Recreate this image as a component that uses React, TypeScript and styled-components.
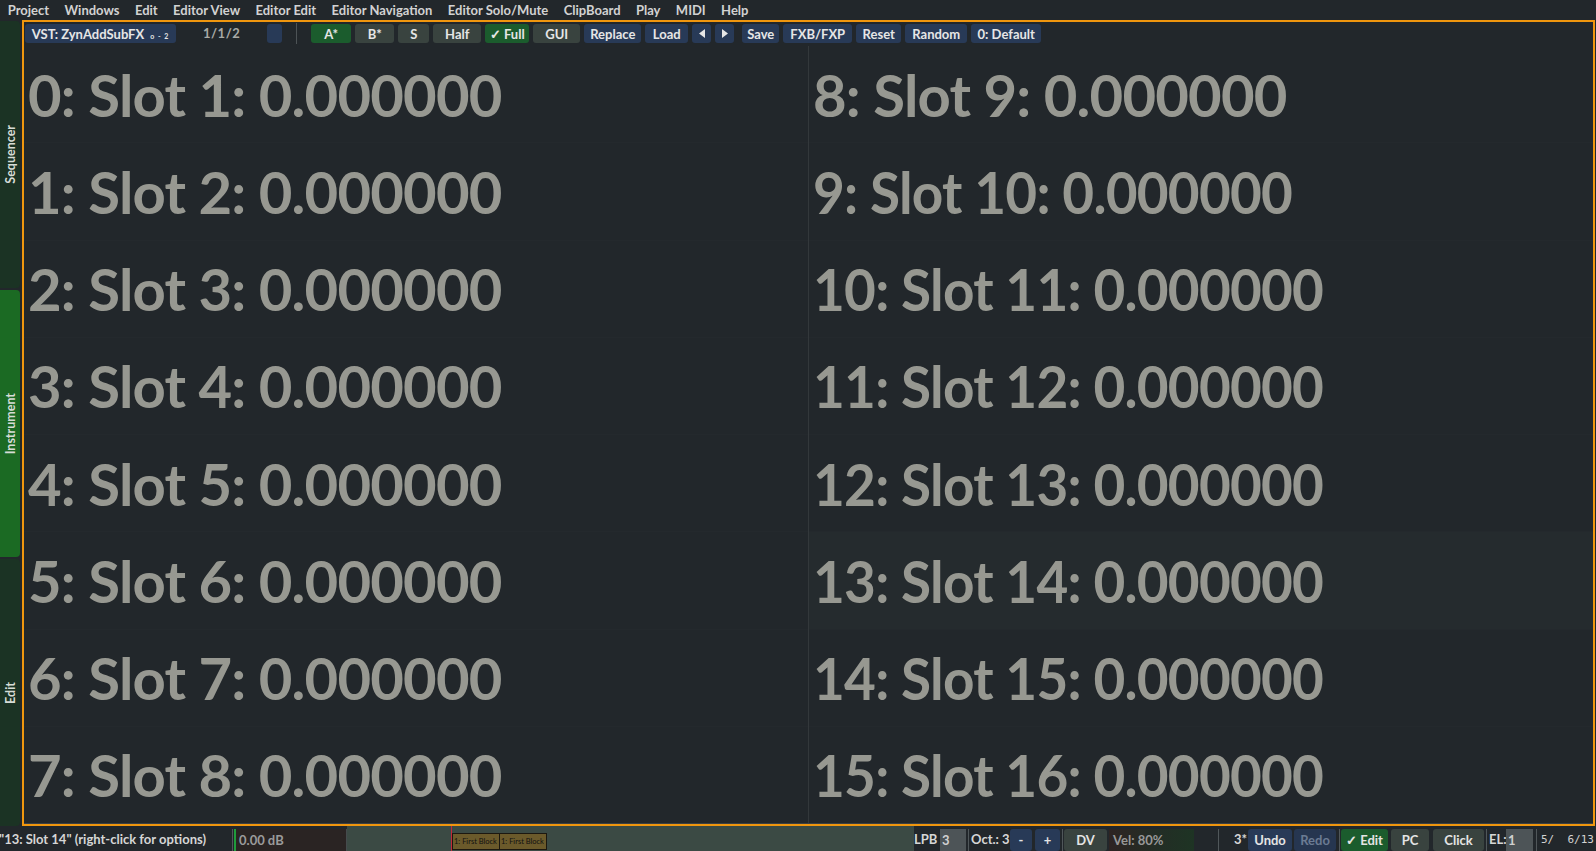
import React from 'react';
import styled, { createGlobalStyle } from 'styled-components';

const GlobalStyle = createGlobalStyle`
  html, body {
    margin: 0;
    padding: 0;
    background: #22272b;
  }
  body {
    font-family: Lato, "Noto Sans", sans-serif;
    overflow: hidden;
  }
`;

type Tone = 'blue' | 'green' | 'gray' | 'dim';

const toneBg: Record<Tone, string> = {
  blue: '#283a57',
  green: '#1b5c2d',
  gray: '#39433f',
  dim: '#263650',
};

const Shell = styled.div`
  width: 1596px;
  height: 851px;
  display: flex;
  flex-direction: column;
  background: #22272b;
`;

const MenuBar = styled.div`
  height: 20px;
  display: flex;
  align-items: center;
`;

const MenuItem = styled.span`
  font-size: 13px;
  font-weight: 700;
  color: #d2d2d2;
  padding: 0 7.7px;
  white-space: nowrap;
`;

const Body = styled.div`
  height: 806px;
  display: flex;
`;

const SideBar = styled.div`
  width: 20px;
  margin-right: 2px;
  padding-top: 1px;
  display: flex;
  flex-direction: column;
  gap: 2px;
`;

const SideTab = styled.div<{ $active?: boolean }>`
  flex: 1;
  background: ${(p) => (p.$active ? '#1b6a23' : '#1b3324')};
  border-radius: 0 4px 4px 0;
  display: flex;
  align-items: center;
  justify-content: center;
`;

const SideLabel = styled.span`
  writing-mode: vertical-rl;
  transform: rotate(180deg);
  font-size: 12.5px;
  font-weight: 700;
  color: #d6dcd6;
  white-space: nowrap;
`;

const Frame = styled.div`
  flex: 1;
  min-width: 0;
  margin-right: 1px;
  border: 2px solid #f0960e;
  display: flex;
  flex-direction: column;
`;

const Toolbar = styled.div`
  height: 24px;
  padding: 2px 0 0 1px;
  box-sizing: border-box;
  display: flex;
  align-items: flex-start;
  gap: 4px;
`;

const ToolButton = styled.div<{ $tone: Tone; $w: number; $ml?: number }>`
  width: ${(p) => p.$w}px;
  margin-left: ${(p) => p.$ml ?? 0}px;
  height: 19px;
  border-radius: 3px;
  background: ${(p) => toneBg[p.$tone]};
  color: #e6e6e6;
  font-size: 13px;
  font-weight: 700;
  display: flex;
  align-items: center;
  justify-content: center;
  white-space: nowrap;
  flex-shrink: 0;
`;

const Tiny = styled.span`
  font-size: 7px;
  margin-left: 6px;
  margin-top: 5px;
  letter-spacing: 1px;
`;

const Counter = styled.span`
  margin: 0 23px 0 23px;
  height: 19px;
  line-height: 19px;
  font-size: 13px;
  font-weight: 700;
  color: #a9aaa6;
  letter-spacing: 0.5px;
`;

const ToolSep = styled.div`
  width: 1px;
  height: 21px;
  margin: -1px 10px 0;
  background: #4d5356;
`;

const Grid = styled.div`
  flex: 1;
  display: flex;
  border-bottom: 1px solid #3b4043;
`;

const Column = styled.div<{ $divider?: boolean }>`
  flex: 1;
  display: flex;
  flex-direction: column;
  border-right: ${(p) => (p.$divider ? '1px solid #33383b' : 'none')};
`;

const Row = styled.div<{ $selected?: boolean }>`
  flex: 1;
  display: flex;
  align-items: center;
  padding-left: 4px;
  background: ${(p) => (p.$selected ? '#252b2e' : 'transparent')};
  border-top: 1px solid #24292d;
  &:first-child {
    border-top: none;
  }
`;

// long labels are squeezed horizontally, as the original does
const SlotLabel = styled.span<{ $squeeze: boolean }>`
  display: inline-block;
  font-size: 58px;
  font-weight: 700;
  letter-spacing: -0.8px;
  color: #979891;
  white-space: pre;
  transform-origin: left center;
  transform: ${(p) => (p.$squeeze ? 'scaleX(0.946)' : 'none')};
`;

const StatusBar = styled.div`
  height: 25px;
  display: flex;
  align-items: stretch;
  font-size: 13px;
  font-weight: 700;
  color: #d6d6d6;
`;

const StatusMsg = styled.div`
  width: 233px;
  margin-left: -1px;
  line-height: 27px;
  white-space: nowrap;
  overflow: hidden;
`;

const VLine = styled.div`
  width: 1px;
  margin-top: 3px;
  background: #50575a;
  flex-shrink: 0;
`;

const Meter = styled.div`
  width: 113px;
  margin: 3px 0 0 1px;
  border-left: 2px solid #1f9c3b;
  border-right: 1px solid #454b4d;
  background: #2a2423;
  color: #9b9b9b;
  padding-left: 3px;
  line-height: 23px;
  box-sizing: border-box;
  flex-shrink: 0;
`;

const PatternArea = styled.div`
  flex: 1;
  background: #3b4a44;
  display: flex;
  align-items: stretch;
  padding-left: 104px;
`;

const RedLine = styled.div`
  width: 1px;
  background: #c3283a;
`;

const BlockStrip = styled.div`
  display: flex;
  margin-top: 7px;
  height: 17px;
  border: 1px solid #1c1810;
  box-sizing: border-box;
`;

const Block = styled.div`
  width: 45px;
  background: #6b5a2b;
  border-right: 1px solid #1c1810;
  font-size: 7.5px;
  font-weight: 400;
  color: #111;
  line-height: 15px;
  padding-left: 1px;
  white-space: nowrap;
  overflow: hidden;
  &:last-child {
    border-right: none;
  }
`;

const StatusLabel = styled.span<{ $pl?: number; $w: number }>`
  box-sizing: border-box;
  padding-left: ${(p) => p.$pl ?? 0}px;
  width: ${(p) => p.$w}px;
  line-height: 27px;
  white-space: nowrap;
  flex-shrink: 0;
`;

const ValueBox = styled.div<{ $w: number }>`
  width: ${(p) => p.$w}px;
  margin-top: 3px;
  background: #4d5457;
  padding-left: 2px;
  line-height: 23px;
  color: #d0d0d0;
  box-sizing: border-box;
  flex-shrink: 0;
`;

const StatusBtn = styled.div<{ $tone: Tone; $w: number; $ml?: number }>`
  width: ${(p) => p.$w}px;
  margin: 3px 0 0 ${(p) => p.$ml ?? 0}px;
  border-radius: 3px;
  background: ${(p) => toneBg[p.$tone]};
  color: ${(p) => (p.$tone === 'dim' ? '#6b7b93' : '#e4e4e4')};
  display: flex;
  align-items: center;
  justify-content: center;
  white-space: nowrap;
  flex-shrink: 0;
`;

const VelBox = styled.div`
  width: 85px;
  margin: 3px 0 0 2px;
  padding-left: 4px;
  box-sizing: border-box;
  background: linear-gradient(90deg, #2e2423 0%, #232d25 55%, #1e3424 100%);
  color: #989898;
  line-height: 23px;
  flex-shrink: 0;
`;

const Spacer = styled.div<{ $w: number }>`
  width: ${(p) => p.$w}px;
  flex-shrink: 0;
`;

const Mono = styled.span`
  width: 59px;
  box-sizing: border-box;
  padding-left: 4px;
  font-family: "DejaVu Sans Mono", "Liberation Mono", monospace;
  font-weight: 400;
  font-size: 11px;
  line-height: 28px;
  white-space: pre;
  color: #d2d2d2;
  flex-shrink: 0;
`;

const Arrow = ({ dir }: { dir: 'left' | 'right' }) => (
  <svg width="6" height="9" viewBox="0 0 6 9">
    {dir === 'left' ? <polygon points="6,0 6,9 0,4.5" fill="#e6e6e6" /> : <polygon points="0,0 0,9 6,4.5" fill="#e6e6e6" />}
  </svg>
);

const menus = ['Project', 'Windows', 'Edit', 'Editor View', 'Editor Edit', 'Editor Navigation', 'Editor Solo/Mute', 'ClipBoard', 'Play', 'MIDI', 'Help'];

const slots = Array.from({ length: 16 }, (_, i) => `${i}: Slot ${i + 1}: 0.000000`);

export default function App() {
  return (
    <Shell>
      <GlobalStyle />
      <MenuBar>
        {menus.map((m) => (
          <MenuItem key={m}>{m}</MenuItem>
        ))}
      </MenuBar>
      <Body>
        <SideBar>
          <SideTab>
            <SideLabel>Sequencer</SideLabel>
          </SideTab>
          <SideTab $active>
            <SideLabel>Instrument</SideLabel>
          </SideTab>
          <SideTab>
            <SideLabel>Edit</SideLabel>
          </SideTab>
        </SideBar>
        <Frame>
          <Toolbar>
            <ToolButton $tone="blue" $w={151}>
              VST: ZynAddSubFX<Tiny>o - 2</Tiny>
            </ToolButton>
            <Counter>1/1/2</Counter>
            <ToolButton $tone="blue" $w={15} />
            <ToolSep />
            <ToolButton $tone="green" $w={40}>A*</ToolButton>
            <ToolButton $tone="gray" $w={39}>B*</ToolButton>
            <ToolButton $tone="gray" $w={31}>S</ToolButton>
            <ToolButton $tone="gray" $w={48}>Half</ToolButton>
            <ToolButton $tone="green" $w={44}>✓ Full</ToolButton>
            <ToolButton $tone="gray" $w={47}>GUI</ToolButton>
            <ToolButton $tone="blue" $w={57}>Replace</ToolButton>
            <ToolButton $tone="blue" $w={43}>Load</ToolButton>
            <ToolButton $tone="blue" $w={19}>
              <Arrow dir="left" />
            </ToolButton>
            <ToolButton $tone="blue" $w={19}>
              <Arrow dir="right" />
            </ToolButton>
            <ToolButton $tone="blue" $w={37} $ml={4}>Save</ToolButton>
            <ToolButton $tone="blue" $w={69}>FXB/FXP</ToolButton>
            <ToolButton $tone="blue" $w={45}>Reset</ToolButton>
            <ToolButton $tone="blue" $w={62}>Random</ToolButton>
            <ToolButton $tone="blue" $w={70}>0: Default</ToolButton>
          </Toolbar>
          <Grid>
            <Column $divider>
              {slots.slice(0, 8).map((s) => (
                <Row key={s}>
                  <SlotLabel $squeeze={s.length > 19}>{s}</SlotLabel>
                </Row>
              ))}
            </Column>
            <Column>
              {slots.slice(8).map((s, i) => (
                <Row key={s} $selected={i === 5}>
                  <SlotLabel $squeeze={s.length > 19}>{s}</SlotLabel>
                </Row>
              ))}
            </Column>
          </Grid>
        </Frame>
      </Body>
      <StatusBar>
        <StatusMsg>"13: Slot 14" (right-click for options)</StatusMsg>
        <VLine />
        <Meter>0.00 dB</Meter>
        <PatternArea>
          <RedLine />
          <BlockStrip>
            <Block>1: First Block</Block>
            <Block>1: First Block</Block>
          </BlockStrip>
        </PatternArea>
        <StatusLabel $w={26}>LPB</StatusLabel>
        <ValueBox $w={26}>3</ValueBox>
        <Spacer $w={2} />
        <VLine />
        <StatusLabel $pl={2} $w={41}>Oct.: 3</StatusLabel>
        <StatusBtn $tone="blue" $w={22}>-</StatusBtn>
        <StatusBtn $tone="blue" $w={25} $ml={3}>+</StatusBtn>
        <Spacer $w={2} />
        <VLine />
        <StatusBtn $tone="gray" $w={43} $ml={1}>DV</StatusBtn>
        <VelBox>Vel: 80%</VelBox>
        <Spacer $w={24} />
        <VLine />
        <StatusLabel $pl={15} $w={29}>3*</StatusLabel>
        <StatusBtn $tone="blue" $w={44}>Undo</StatusBtn>
        <StatusBtn $tone="dim" $w={42} $ml={2}>Redo</StatusBtn>
        <Spacer $w={3} />
        <VLine />
        <StatusBtn $tone="green" $w={47} $ml={1}>✓ Edit</StatusBtn>
        <StatusBtn $tone="gray" $w={38} $ml={3}>PC</StatusBtn>
        <StatusBtn $tone="gray" $w={51} $ml={4}>Click</StatusBtn>
        <Spacer $w={2} />
        <VLine />
        <StatusLabel $pl={2} $w={19}>EL:</StatusLabel>
        <ValueBox $w={27}>1</ValueBox>
        <Spacer $w={3} />
        <VLine />
        <Mono>5/  6/13</Mono>
      </StatusBar>
    </Shell>
  );
}
